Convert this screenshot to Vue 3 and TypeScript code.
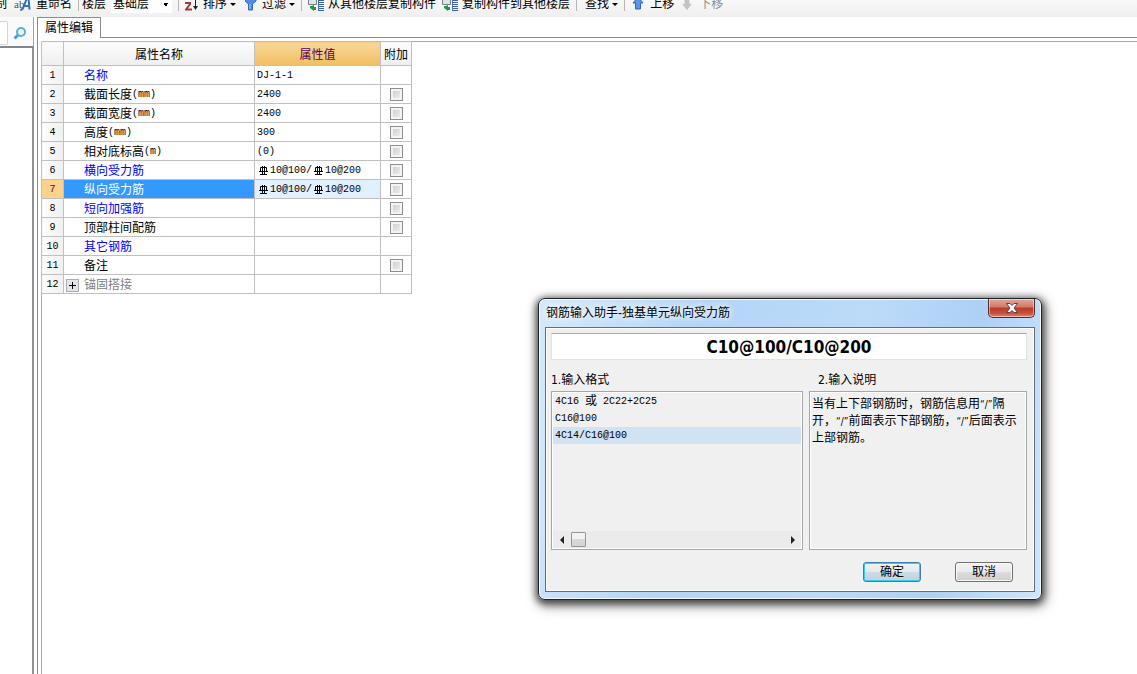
<script setup lang="ts">
import { ref } from 'vue'

interface Part { text?: string; bar?: boolean }
interface Row {
  name: string
  unit?: string
  tone?: 'blue' | 'gray'
  value?: Part[]
  check?: boolean
  expand?: boolean
}

const rebar: Part[] = [
  { bar: true }, { text: '10@100/' }, { bar: true }, { text: '10@200' },
]

const rows: Row[] = [
  { name: '名称', tone: 'blue', value: [{ text: 'DJ-1-1' }] },
  { name: '截面长度', unit: '(mm)', value: [{ text: '2400' }], check: true },
  { name: '截面宽度', unit: '(mm)', value: [{ text: '2400' }], check: true },
  { name: '高度', unit: '(mm)', value: [{ text: '300' }], check: true },
  { name: '相对底标高', unit: '(m)', value: [{ text: '(0)' }], check: true },
  { name: '横向受力筋', tone: 'blue', value: rebar, check: true },
  { name: '纵向受力筋', tone: 'blue', value: rebar, check: true },
  { name: '短向加强筋', tone: 'blue', check: true },
  { name: '顶部柱间配筋', check: true },
  { name: '其它钢筋', tone: 'blue' },
  { name: '备注', check: true },
  { name: '锚固搭接', tone: 'gray', expand: true },
]

const selected = ref(6)
const format = ref(2)
const formula = ref('C10@100/C10@200')
const search = ref('')
</script>

<template>
  <div class="app">
    <header class="toolbar">
      <div class="tools">
        <button class="tool first">制</button>
        <button class="tool">
          <svg width="17" height="16" viewBox="0 0 17 16">
            <text x="0" y="12" class="ab">ab</text>
            <path d="M8.500 13.500L13 2h1.500l1 11.500M10.500 10h5" fill="none" stroke="#2f6fc4" stroke-width="2" />
            <path d="M7 12l-1 3 3-1z" fill="#1d4f9e" />
          </svg>
          重命名
        </button>
        <i class="sep"></i>
        <label for="floor">楼层</label>
        <select id="floor" class="floor"><option>基础层</option></select>
        <i class="sep"></i>
        <button class="tool">
          <svg width="13" height="16" viewBox="0 0 13 16">
            <path d="M0 1h6M0 7h6M5.500 7.500L1 13.500h6" fill="none" stroke="#a33a3a" stroke-width="2" />
            <path d="M10.500 1v10" stroke="#222" />
            <path d="M8 10h5l-2.500 4z" fill="#222" />
          </svg>
          排序<i class="caret"></i>
        </button>
        <button class="tool filter">
          <svg width="12" height="16" viewBox="0 0 12 16">
            <path d="M0 3h11v2L7.500 8v6h-4V8L0 5z" fill="#4f8be0" stroke="#3468bd" />
            <path d="M5 8v5" stroke="#a8cbf7" />
          </svg>
          过滤<i class="caret"></i>
        </button>
        <i class="sep"></i>
        <button v-for="t in ['从其他楼层复制构件', '复制构件到其他楼层']" :key="t" class="tool copy">
          <svg width="16" height="16" viewBox="0 0 16 16">
            <path d="M.500 2.500h8v6h-8z" fill="#dfe4ea" stroke="#77808a" />
            <path d="M10 4.500h6M10 6.500h6M10 8.500h6M10 10.500h6M10 12.500h6M10 14.500h6" stroke="#3b62a5" />
            <path d="M10.500 2v13" stroke="#4f73b5" />
            <path d="M2 10h2l2-1v2h2v3H6v1l-4-3z" fill="#1f9a3c" />
          </svg>
          {{ t }}
        </button>
        <i class="sep"></i>
        <button class="tool find">查找<i class="caret"></i></button>
        <i class="sep"></i>
        <button class="tool">
          <svg width="14" height="16" viewBox="0 0 14 16">
            <path d="M7 1l5 6H9.500v6h-5V7H2z" fill="#5d93e8" stroke="#2f62bb" />
          </svg>
          上移
        </button>
        <button class="tool" disabled>
          <svg width="14" height="16" viewBox="0 0 14 16">
            <path d="M4.500 2h5v6H12l-5 6-5-6h2.500z" fill="#c4c4c4" />
          </svg>
          下移
        </button>
      </div>
    </header>

    <div class="body">
      <aside class="side">
        <div class="search">
          <input v-model="search" aria-label="搜索" />
          <button aria-label="查找">
            <svg width="14" height="14" viewBox="0 0 14 14">
              <circle cx="8" cy="6" r="4" fill="#eaf5fd" stroke="#5aaee4" stroke-width="2" />
              <path d="M5 9L1.500 12.500" stroke="#4a9fdc" stroke-width="3" />
            </svg>
          </button>
        </div>
        <div class="tree"></div>
      </aside>

      <main class="main">
        <div class="tabs"><button class="tab">属性编辑</button><span class="rest"></span></div>
        <div class="frame">
          <table class="props">
            <colgroup><col class="c1" /><col class="c2" /><col class="c3" /><col class="c4" /></colgroup>
            <thead>
              <tr><th></th><th>属性名称</th><th class="hot">属性值</th><th>附加</th></tr>
            </thead>
            <tbody>
              <tr v-for="(r, i) in rows" :key="i" :class="{ on: i === selected }" @click="selected = i">
                <th scope="row" class="mono">{{ i + 1 }}</th>
                <td class="name" :class="r.tone">
                  <div class="cell">
                    <span class="lead"><button v-if="r.expand" class="plus" aria-label="展开"></button></span>
                    <span :id="'n' + i">{{ r.name }}</span><span v-if="r.unit" class="mono">{{ r.unit }}</span>
                  </div>
                </td>
                <td class="value mono">
                  <div class="cell">
                    <template v-for="(p, k) in r.value" :key="k">
                      <svg v-if="p.bar" width="13" height="12" viewBox="0 0 13 12">
                        <path d="M3.500 2.500h6v4h-6zM5.500 1v8M7.500 1v8M2 6.500h9M3 9.500h7" fill="none" stroke="#000" />
                      </svg>
                      <span v-else>{{ p.text }}</span>
                    </template>
                  </div>
                </td>
                <td class="extra"><input v-if="r.check" type="checkbox" :aria-labelledby="'n' + i" /></td>
              </tr>
            </tbody>
          </table>
        </div>
      </main>
    </div>

    <section class="dialog" role="dialog" aria-labelledby="dlg-title">
      <div class="titlebar">
        <h1 id="dlg-title">钢筋输入助手-独基单元纵向受力筋</h1>
        <button class="close" aria-label="关闭">
          <svg width="14" height="12" viewBox="0 0 14 12">
            <path d="M1.500 1.500h3.500l2 2 2-2h3.500L9 6l3.500 4.500H9l-2-2-2 2H1.500L5 6z" fill="#fff" stroke="#5a4048" />
          </svg>
        </button>
      </div>
      <div class="client">
        <input v-model="formula" class="formula" aria-label="钢筋信息" />
        <div class="panes">
          <div class="pane formats">
            <h2 id="fmt"><span class="lat">1.</span>输入格式</h2>
            <div class="box">
              <ul aria-labelledby="fmt">
                <li :class="{ sel: format === 0 }" @click="format = 0"><span class="mono">4C16&nbsp;</span>或<span class="mono">&nbsp;2C22+2C25</span></li>
                <li :class="{ sel: format === 1 }" @click="format = 1"><span class="mono">C16@100</span></li>
                <li :class="{ sel: format === 2 }" @click="format = 2"><span class="mono">4C14/C16@100</span></li>
              </ul>
              <div class="scroll">
                <button class="arrow left" aria-label="向左"></button>
                <i class="thumb"></i>
                <button class="arrow right" aria-label="向右"></button>
              </div>
            </div>
          </div>
          <div class="pane notes">
            <h2><span class="lat">2.</span>输入说明</h2>
            <div class="box">
              <p>当有上下部钢筋时，钢筋信息用<span class="q">“/”</span>隔<br />开，<span class="q">“/”</span>前面表示下部钢筋，<span class="q">“/”</span>后面表示<br />上部钢筋。</p>
            </div>
          </div>
        </div>
        <div class="actions">
          <button class="btn ok">确定</button>
          <button class="btn">取消</button>
        </div>
      </div>
    </section>
  </div>
</template>

<style>
html, body, #app { height: 100%; }
body { margin: 0; background: #fff; }
</style>

<style scoped>
* { box-sizing: border-box; }
.app {
  position: relative;
  height: 100%;
  display: flex;
  flex-direction: column;
  overflow: hidden;
  font: 12px/16px "Liberation Sans", "Noto Sans CJK SC", sans-serif;
  color: #000;
}
button, input, select { font: inherit; color: inherit; }
button { background: none; border: 0; padding: 0; margin: 0; }
.mono { font-family: "Liberation Mono", monospace; font-size: 10px; font-weight: 400; }
svg { display: block; flex: none; }

.toolbar {
  height: 17px;
  flex: none;
  overflow: hidden;
  background: linear-gradient(#f8f8f8, #efefef);
}
.tools { display: flex; align-items: center; height: 28px; margin-top: -10px; white-space: nowrap; }
.tool { display: flex; align-items: center; gap: 5px; padding: 0 3px; white-space: nowrap; }
.tool.first { margin-left: -8px; margin-right: 1px; }
.tool.filter { margin-left: 3px; }
.tool.copy { gap: 4px; }
.tool.find { padding-left: 5px; }
.tool:disabled { color: #8d8d8d; }
.ab { font: 11px "Liberation Serif", serif; fill: #555; }
.sep { width: 1px; height: 14px; margin: 0 3px; background: #b5b5b5; flex: none; }
.caret { border: 3px solid transparent; border-top-color: #000; border-bottom: 0; margin-left: -2px; }
.floor {
  appearance: none;
  width: 61px;
  height: 18px;
  margin: 0 3px 0 5px;
  padding: 0 2px;
  border: 0;
  border-radius: 0;
  background:
    linear-gradient(135deg, #000 50%, transparent 50%) 55px 8px / 3px 3px no-repeat,
    linear-gradient(225deg, #000 50%, transparent 50%) 52px 8px / 3px 3px no-repeat,
    #fff;
}

.body { flex: 1; display: flex; min-height: 0; }
.side { width: 34px; flex: none; display: flex; flex-direction: column; }
.search { height: 31px; padding-top: 3px; display: flex; align-items: center; background: #fafafa; border-right: 1px solid #a5a5a9; border-bottom: 2px solid #85858b; }
.search input { width: 8px; height: 24px; border: 1px solid #d5d5d5; border-left: 0; padding: 0; border-radius: 0 2px 2px 0; }
.search button { margin-left: 5px; }
.tree { flex: 1; border-right: 2px solid #8e9196; }
.main { flex: 1; min-width: 0; display: flex; flex-direction: column; margin-left: 3px; }
.tabs { display: flex; height: 21px; }
.tab { width: 64px; border: 1px solid #8b8b93; border-bottom: 0; background: #fff; flex: none; }
.rest { flex: 1; border-bottom: 1px solid #8b8b93; }
.frame {
  flex: 1;
  border-left: 1px solid #8b8b93;
  padding: 3px 0 0 3px;
  background:
    linear-gradient(#a9a9ad, #a9a9ad) 3px 3px / 100% 1px no-repeat,
    linear-gradient(#a9a9ad, #a9a9ad) 3px 3px / 1px 100% no-repeat;
}
.props { table-layout: fixed; width: 371px; border-collapse: collapse; background: #fff; }
.c1 { width: 22px; }
.c2 { width: 191px; }
.c3 { width: 126px; }
.c4 { width: 31px; }
.props th, .props td { border: 1px solid #c0c0c0; padding: 0; height: 19px; line-height: 16px; }
.props thead th { height: 24px; padding-top: 2px; font-weight: 400; background: linear-gradient(#fcfcfc, #efefef); }
.props thead th.hot { background: linear-gradient(#f9d79a, #f1bf61); color: #5a005a; }
.props tbody th { padding-top: 2px; background: linear-gradient(90deg, #fdfdfd, #f0f0f0); text-align: center; }
.cell { display: flex; align-items: center; height: 18px; padding-top: 2px; white-space: nowrap; }
.lead { width: 20px; display: flex; padding-left: 2px; }
.value .cell { padding-left: 2px; }
.blue { color: #00f; }
.gray { color: #808080; }
.on th { background: #fdd28a !important; color: #5a005a; }
.on .name { background: #3399ff; color: #fff; }
.on .value { background: #e0f0ff; }
.extra { text-align: center; }
.extra input {
  appearance: none;
  display: block;
  width: 13px;
  height: 13px;
  margin: 0 auto;
  border: 1px solid #8e8f8f;
  background: linear-gradient(135deg, #c4c8d0, #f4f4f4);
  box-shadow: inset 0 0 0 2px #f4f4f4;
}
.extra input:checked { background: #4a6a9a; }
.plus {
  width: 13px;
  height: 13px;
  border: 1px solid #a8acb2;
  background:
    linear-gradient(#000, #000) center / 7px 1px no-repeat,
    linear-gradient(#000, #000) center / 1px 7px no-repeat,
    #e2e5ea;
}

.dialog {
  position: absolute;
  left: 538px;
  top: 298px;
  width: 504px;
  padding: 0 6px 7px;
  border: 1px solid #1f242b;
  border-radius: 7px;
  background: linear-gradient(100deg, #d6e9fb, #b4d5f7 30%, #bcdbf9 60%, #add0f5 80%, #cfe6fd);
  box-shadow: inset 0 0 0 1px #f2f9ff, 0 2px 7px 2px rgba(0, 0, 0, .6), 2px 4px 12px 3px rgba(0, 0, 0, .35);
}
.titlebar { display: flex; justify-content: space-between; height: 28px; }
.titlebar h1 { margin: 5px 0 0 1px; font-size: 12px; line-height: 18px; font-weight: 400; text-shadow: 0 0 6px #fff, 0 0 8px #fff; }
.close {
  width: 47px;
  height: 19px;
  display: flex;
  align-items: center;
  justify-content: center;
  border: 1px solid #5b2a2c;
  border-top: 0;
  border-radius: 0 0 5px 5px;
  background: linear-gradient(#e3a79c, #d0796b 45%, #b93a27 50%, #c9503c 80%, #dd8a70);
  box-shadow: inset 0 0 0 1px rgba(255, 255, 255, .45);
}
.client {
  border: 1px solid #5f6f80;
  background: #f0f0f0;
  box-shadow: inset 0 0 0 1px #fff;
  padding: 5px 7px 9px 5px;
}
.formula {
  display: block;
  width: 100%;
  height: 27px;
  border: 1px solid #e2e3ea;
  border-top-color: #abadb3;
  background: #fff;
  padding: 0;
  text-align: center;
  font: bold 17px/24px "DejaVu Sans Condensed", "DejaVu Sans", sans-serif;
}
.panes { display: flex; gap: 6px; }
.formats { flex: 252; }
.notes { flex: 218; }
.pane h2 { margin: 12px 0 3px; font-size: 12px; line-height: 16px; font-weight: 400; }
.notes h2 { padding-left: 9px; }
.lat { font-family: "DejaVu Sans Condensed", "DejaVu Sans", sans-serif; }
.box {
  height: 159px;
  border: 1px solid #a5a7ab;
  box-shadow: inset 0 0 0 1px #fff;
  padding: 1px;
  display: flex;
  flex-direction: column;
}
.box ul { list-style: none; margin: 0; padding: 0; flex: 1; }
.box li { height: 17px; line-height: 17px; padding-left: 2px; display: flex; white-space: nowrap; }
.box li.sel { background: #d1e2f2; }
.box p { margin: 3px 0 0 1px; line-height: 17px; white-space: nowrap; }
.q { font-family: "DejaVu Sans Condensed", "DejaVu Sans", sans-serif; font-size: 10px; }
.scroll { height: 17px; display: flex; align-items: center; background: #ebebeb; }
.arrow { width: 17px; height: 17px; display: flex; align-items: center; justify-content: center; }
.arrow::before { content: ""; border: 4px solid transparent; }
.left::before { border-left: 0; border-right-color: #222; }
.right::before { border-right: 0; border-left-color: #222; }
.right { margin-left: auto; }
.thumb { width: 15px; height: 15px; margin-left: 1px; border: 1px solid #979797; border-radius: 1px; background: linear-gradient(#f3f3f3 45%, #d9d9db 50%, #d2d2d4); }
.actions { display: flex; justify-content: flex-end; gap: 34px; padding: 12px 14px 0 0; }
.btn {
  width: 58px;
  height: 20px;
  line-height: 17px;
  padding-top: 1px;
  border: 1px solid #707070;
  border-radius: 3px;
  background: linear-gradient(#f2f2f2, #ebebeb 50%, #dddddd 50%, #cfcfcf);
  box-shadow: inset 0 0 0 1px #fafafa;
}
.ok {
  border-color: #3c7fb1;
  background: linear-gradient(#eef3f6, #e2eaee 50%, #cddbe2 50%, #c5d2d9);
  box-shadow: inset 0 0 0 1px #35cdf8;
}
</style>
